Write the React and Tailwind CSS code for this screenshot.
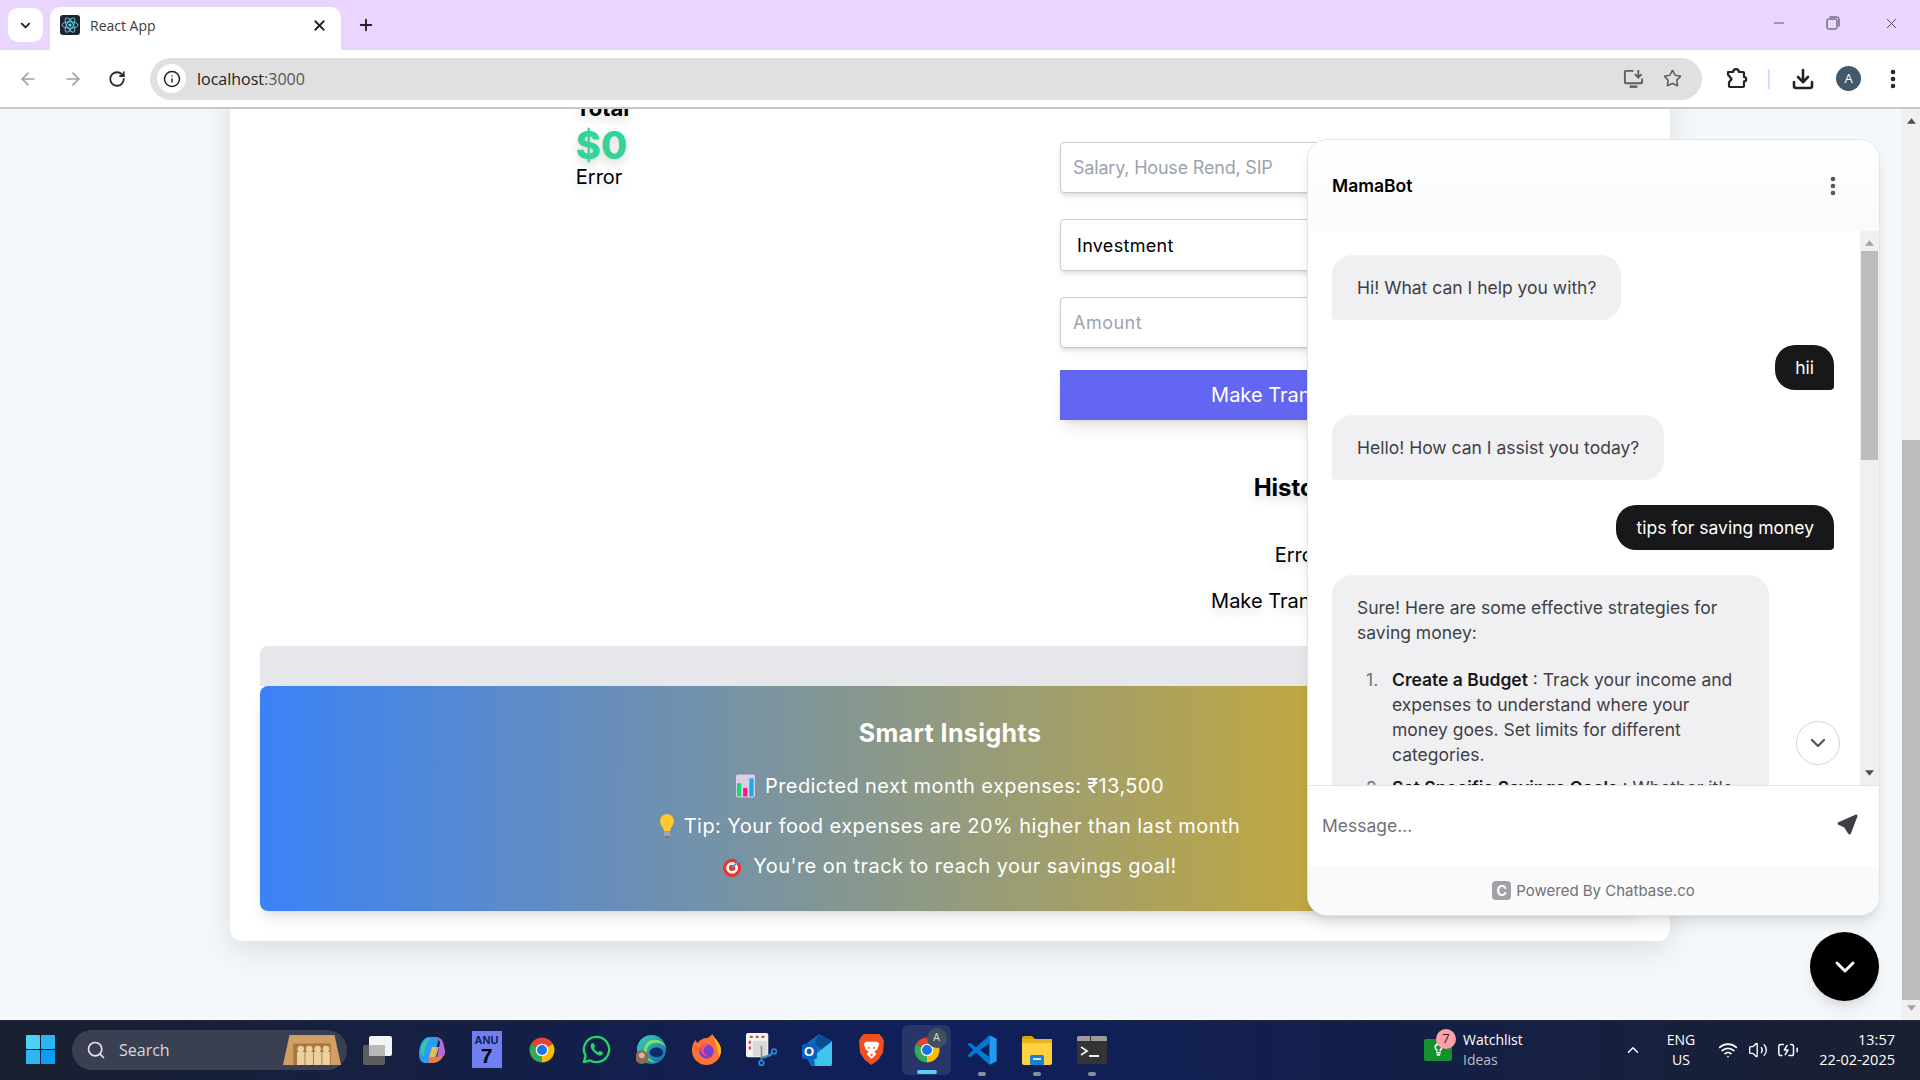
import React from "react";
import {
  ChevronDown,
  ChevronUp,
  X,
  Plus,
  ArrowLeft,
  ArrowRight,
  RotateCw,
  Info,
  Star,
  Download,
  EllipsisVertical,
  Minus,
  Search,
  Wifi,
  Volume2,
  BatteryCharging,
  Lightbulb,
} from "lucide-react";

function ReactFavicon() {
  return (
    <svg viewBox="0 0 20 20" className="w-5 h-5 rounded-[3px] bg-[#20232a]">
      <g fill="none" stroke="#61dafb" strokeWidth="0.9">
        <ellipse cx="10" cy="10" rx="8" ry="3.2" />
        <ellipse cx="10" cy="10" rx="8" ry="3.2" transform="rotate(60 10 10)" />
        <ellipse cx="10" cy="10" rx="8" ry="3.2" transform="rotate(120 10 10)" />
      </g>
      <circle cx="10" cy="10" r="1.6" fill="#61dafb" />
    </svg>
  );
}

function RestoreIcon() {
  return (
    <svg viewBox="0 0 14 14" className="w-[14px] h-[14px]" fill="none" stroke="#3b3640" strokeWidth="1">
      <rect x="1" y="3" width="10" height="10" rx="1.5" />
      <path d="M3.5 1h7.5a2 2 0 0 1 2 2v7.5" />
    </svg>
  );
}

function InstallIcon() {
  return (
    <svg viewBox="0 0 24 24" className="w-[23px] h-[23px]" fill="none" stroke="#5f5f5f" strokeWidth="2">
      <path d="M12 4H4a1 1 0 0 0-1 1v11a1 1 0 0 0 1 1h16a1 1 0 0 0 1-1v-4" />
      <path d="M8 20.5h8" strokeWidth="2.6" />
      <path d="M17 3v8M13.5 7.5 17 11l3.5-3.5" />
    </svg>
  );
}

function ExtensionsIcon() {
  return (
    <svg viewBox="0 0 24 24" className="w-[24px] h-[24px]" fill="none" stroke="#222" strokeWidth="2.2" strokeLinejoin="round">
      <path d="M4 5h5.2a2.8 2.8 0 0 1 5.6 0H19a1 1 0 0 1 1 1v4a2.2 2.2 0 0 1 0 4.4V19a1 1 0 0 1-1 1H6a1 1 0 0 1-1-1v-3.500l2.500-3.500L4 7.500Z" />
    </svg>
  );
}

function Triangle({ down, className }) {
  return (
    <svg viewBox="0 0 10 6" className={className}>
      <path d={down ? "M0 0h10L5 6z" : "M0 6h10L5 0z"} fill="currentColor" />
    </svg>
  );
}

function ChromeLogo() {
  return (
    <svg viewBox="0 0 48 48" className="w-[30px] h-[30px]">
      <path d="M24 24 6.68 14A20 20 0 0 1 41.32 14Z" fill="#ea4335" />
      <path d="M24 24 41.32 14A20 20 0 0 1 24 44Z" fill="#fbbc04" />
      <path d="M24 24V44A20 20 0 0 1 6.68 14Z" fill="#34a853" />
      <circle cx="24" cy="24" r="10" fill="#fff" />
      <circle cx="24" cy="24" r="8" fill="#1a73e8" />
    </svg>
  );
}

function WindowsLogo() {
  return (
    <svg viewBox="0 0 29 29" className="w-[29px] h-[29px]">
      <rect x="0" y="0" width="14" height="14" rx="1" fill="#4fd0f7" />
      <rect x="15" y="0" width="14" height="14" rx="1" fill="#2cb7f3" />
      <rect x="0" y="15" width="14" height="14" rx="1" fill="#2cb7f3" />
      <rect x="15" y="15" width="14" height="14" rx="1" fill="#0f9cee" />
    </svg>
  );
}

function TaskView() {
  return (
    <svg viewBox="0 0 30 30" className="w-[30px] h-[30px]">
      <rect x="1" y="10" width="22" height="20" rx="2" fill="#5c5c5c" />
      <rect x="7" y="1" width="23" height="20" rx="2" fill="#f4f4f4" />
      <rect x="7" y="10" width="16" height="11" fill="#b9b9b9" />
    </svg>
  );
}

function Copilot() {
  return (
    <svg viewBox="0 0 30 30" className="w-[30px] h-[30px]">
      <path d="M12 2h6c2 0 3 1 3.5 3L16 25c-.6 2-2 3-4 3H8C4 28 2 24 2 19 2 9 7 2 12 2Z" fill="#2c9cf0" />
      <path d="M7 21c-3-1-4-5-3-9s5-9 9-9c-3 3-6 12-6 18Z" fill="#35c9a0" />
      <path d="M18 2c4 0 7 2 8 5l2 9c.5 4-2 6-5 6h-3L23 8c-.5-3-2-5-5-6Z" fill="#b56ae0" />
      <path d="M11 22h9c4 0 7-2 8-6-1 7-6 12-12 12h-6c2 0 3-2 1-6Z" fill="#f0784e" />
      <path d="M15 12h7l-3 10h-7Z" fill="#f7c948" opacity="0.85" />
    </svg>
  );
}

function AnuCalendar() {
  return (
    <div className="w-[30px] h-[37px] bg-[#6f7ff0] flex flex-col items-center font-['Liberation_Sans',sans-serif] text-[#10204f] font-bold">
      <span className="text-[11px] leading-[12px] mt-[3px]">ANU</span>
      <span className="text-[21px] leading-[20px] text-black">7</span>
    </div>
  );
}

function WhatsApp() {
  return (
    <svg viewBox="0 0 32 32" className="w-[31px] h-[31px]">
      <path d="M16 3a13 13 0 0 0-11.2 19.6L3 29l6.6-1.7A13 13 0 1 0 16 3Z" fill="none" stroke="#25d366" strokeWidth="2.4" strokeLinejoin="round" />
      <path d="M11.5 9.5c-1 .6-1.8 2-1.5 3.7.5 3 4.6 8 9 9 1.7.3 3-.6 3.5-1.8l.2-1.4-3.2-1.700-1.500 1.600c-2-.7-3.800-2.500-4.600-4.500l1.300-1.500-1.500-3.400Z" fill="#25d366" />
    </svg>
  );
}

function Edge() {
  return (
    <svg viewBox="0 0 32 32" className="w-[31px] h-[31px]">
      <defs>
        <linearGradient id="edgeFill" x1="0" y1="0" x2="1" y2="1">
          <stop offset="0" stopColor="#3bd0b0" />
          <stop offset="1" stopColor="#1167b1" />
        </linearGradient>
      </defs>
      <circle cx="16" cy="16" r="15" fill="url(#edgeFill)" />
      <path d="M31 17c0-5-5-8-10-8-6 0-10 4-10 9 0 6 5 11 11 11-5 1-14-2-14-11C8 10 14 5 20 6c6 .5 11 5 11 11Z" fill="#7fe06a" />
      <ellipse cx="21" cy="19" rx="7" ry="5" fill="#0c2a66" />
      <circle cx="6" cy="24" r="7" fill="#8a6a55" />
      <circle cx="6" cy="22" r="3" fill="#d8b79c" />
    </svg>
  );
}

function Firefox() {
  return (
    <svg viewBox="0 0 30 32" className="w-[29px] h-[31px]">
      <path d="M16 4c2-1 4-3 5-4 1 3 3 4 5 7 3 4 4 7 4 10a15 15 0 0 1-30 0c0-4 1-8 4-11 0 2 1 3 2 3 2-3 6-5 10-5Z" fill="#ff7139" />
      <path d="M21 0c1 3 3 4 5 7 3 4 4 7 4 10 0 3-1 5-2 7-1-8-4-15-7-24Z" fill="#ffb61e" />
      <circle cx="15" cy="18" r="7.5" fill="#7a3fc4" />
      <path d="M9 13c2-2 6-3 8-1-3 0-5 2-5 5 0 4 3 6 7 6-5 2-12-4-10-10Z" fill="#ff4f5e" />
    </svg>
  );
}

function SnippingTool() {
  return (
    <svg viewBox="0 0 32 34" className="w-[31px] h-[33px]">
      <rect x="0" y="0" width="23" height="25" rx="2" fill="#f4f4f4" />
      <path d="M4 4h3M10 4h3M16 4h3M4 8v3M4 14v3" stroke="#e0483e" strokeWidth="2.4" />
      <rect x="7" y="8" width="15" height="16" fill="#d9d9d9" />
      <path d="M16 13v14M16 25l10-2" stroke="#8d8d8d" strokeWidth="1.6" fill="none" />
      <circle cx="29" cy="19" r="2.4" fill="none" stroke="#1f8fe0" strokeWidth="1.8" />
      <circle cx="16" cy="31" r="2.4" fill="none" stroke="#1f8fe0" strokeWidth="1.8" />
      <path d="M18 26l9-5M16 28v-3" stroke="#1f8fe0" strokeWidth="1.8" />
    </svg>
  );
}

function Outlook() {
  return (
    <div className="relative w-[30px] h-[33px]">
      <svg viewBox="0 0 30 33" className="w-[30px] h-[33px]">
        <path d="M5 10 17 1l13 7v23a2 2 0 0 1-2 2H9l-4-8Z" fill="#0f6cbd" />
        <path d="M30 8v23a2 2 0 0 1-2 2H13l-1-10 8-7Z" fill="#3fc4ee" />
        <path d="M17 1l13 7-10 8-8-5Z" fill="#0a4c95" />
      </svg>
      <div className="absolute left-0 top-[11px] w-[15px] h-[15px] rounded-[2px] bg-[#0a5fc0] text-white text-[13px] leading-[15px] text-center font-bold font-['Liberation_Sans',sans-serif]">
        O
      </div>
    </div>
  );
}

function Brave() {
  return (
    <svg viewBox="0 0 26 32" className="w-[25px] h-[31px]">
      <path d="M5 0h16l3 3 2 4-1 12-5 8-7 5-7-5-5-8L0 7l2-4Z" fill="#f0501e" />
      <path d="M7 8h12l2 2-2 6-3 2 2 3-5 5-5-5 2-3-3-2-2-6Z" fill="#fff" />
      <path d="M10 13l2 2h-3ZM16 13l1 2h-3ZM11 21h4l-2 2Z" fill="#f0501e" />
    </svg>
  );
}

function VsCode() {
  return (
    <svg viewBox="0 0 24 24" className="w-[32px] h-[32px]">
      <path d="M17.5 1 23 3.6V20.400L17.5 23Z" fill="#1f9cf0" />
      <path d="M17.5 1 7.5 10 3 6.5 1 7.6 5.5 12 1 16.400 3 17.500 7.500 14 17.500 23V17L10.500 12 17.500 7Z" fill="#0078d4" />
    </svg>
  );
}

function Folder() {
  return (
    <svg viewBox="0 0 30 30" className="w-[30px] h-[30px]">
      <path d="M0 3a2 2 0 0 1 2-2h8l3 3h-13Z" fill="#d9a106" />
      <rect x="0" y="4" width="30" height="26" rx="2" fill="#fdd13f" />
      <rect x="0" y="4" width="30" height="4" fill="#e8b21a" />
      <rect x="8" y="20" width="14" height="10" rx="1.5" fill="#1e7fd0" />
      <rect x="11" y="23" width="8" height="2" fill="#c9e6ff" />
    </svg>
  );
}

function Terminal() {
  return (
    <svg viewBox="0 0 30 28" className="w-[30px] h-[28px]">
      <rect x="0" y="0" width="30" height="28" rx="2" fill="#333" />
      <path d="M2 0h26a2 2 0 0 1 2 2v3H0V2a2 2 0 0 1 2-2Z" fill="#9c9c9c" />
      <rect x="13" y="0" width="1" height="5" fill="#333" />
      <path d="M4 11l6 4-6 4" fill="none" stroke="#eee" strokeWidth="1.8" />
      <rect x="12" y="19" width="10" height="2" fill="#eee" />
    </svg>
  );
}

function ChartEmoji() {
  return (
    <svg viewBox="0 0 20 24" className="w-[19px] h-[24px]">
      <rect x="0" y="0" width="20" height="24" rx="2" fill="#d9d0e6" />
      <rect x="1" y="9" width="4.5" height="14" fill="#1ed66f" />
      <rect x="7.5" y="14" width="4.5" height="9" fill="#f01a8c" />
      <rect x="14" y="4" width="4.5" height="19" fill="#1aa8ee" />
    </svg>
  );
}

function BulbEmoji() {
  return (
    <svg viewBox="0 0 14 24" className="w-[14px] h-[24px]">
      <path d="M7 0a7 7 0 0 0-7 7c0 3 2 5 3.5 8l.5 2h6l.5-2C12 12 14 10 14 7a7 7 0 0 0-7-7Z" fill="#fdc92f" />
      <rect x="4" y="17" width="6" height="5" rx="1" fill="#a3a3a3" />
      <rect x="5" y="22" width="4" height="2" rx="1" fill="#777" />
    </svg>
  );
}

function TargetEmoji() {
  return (
    <svg viewBox="0 0 22 24" className="w-[20px] h-[22px]">
      <circle cx="10" cy="14" r="10" fill="#e8342b" />
      <circle cx="10" cy="14" r="6.5" fill="#fff" />
      <circle cx="10" cy="14" r="3.5" fill="#e8342b" />
      <path d="M10 14 20 3" stroke="#3ba5e8" strokeWidth="2" />
      <path d="M18 0v4h4z" fill="#3ba5e8" />
    </svg>
  );
}

function TabStrip() {
  return (
    <div className="h-[50px] bg-[#e9d5ff] flex items-start shrink-0">
      <div className="w-[35px] h-[34px] mt-2 ml-2 bg-white rounded-[10px] flex items-center justify-center">
        <ChevronDown className="w-[15px] h-[15px] text-[#222]" strokeWidth={3} />
      </div>
      <div className="w-[291px] h-[43px] mt-[7px] ml-[7px] bg-white rounded-t-[10px] flex items-center pl-[10px] pr-[13px] pb-[7px]">
        <ReactFavicon />
        <span className="ml-[10px] text-[14px] text-[#3c3c3c] font-['Open_Sans',sans-serif]">React App</span>
        <X className="ml-auto w-[17px] h-[17px] text-[#222]" strokeWidth={2.5} />
      </div>
      <Plus className="ml-[16px] mt-[16px] w-[18px] h-[18px] text-[#222]" strokeWidth={2.5} />
      <div className="ml-auto h-[46px] flex items-center text-[#3b3640]">
        <Minus className="w-[16px] h-[16px]" strokeWidth={1.2} />
        <div className="ml-[39px]">
          <RestoreIcon />
        </div>
        <X className="ml-[43px] mr-[20px] w-[17px] h-[17px]" strokeWidth={1.2} />
      </div>
    </div>
  );
}

function Toolbar() {
  return (
    <div className="h-[59px] bg-white border-b-2 border-[#c8c8c8] flex items-center shrink-0 rounded-t-[10px]">
      <ArrowLeft className="ml-[18px] w-[20px] h-[20px] text-[#a0a0a0]" strokeWidth={2} />
      <ArrowRight className="ml-[25px] w-[20px] h-[20px] text-[#a0a0a0]" strokeWidth={2} />
      <RotateCw className="ml-[25px] w-[18px] h-[18px] text-[#2a2a2a]" strokeWidth={2.4} />
      <div className="ml-[24px] w-[1552px] h-[42px] bg-[#e0e0e0] rounded-full flex items-center pl-[7px] pr-[20px]">
        <div className="w-[29px] h-[29px] bg-white rounded-full flex items-center justify-center">
          <Info className="w-[18px] h-[18px] text-[#222]" strokeWidth={2} />
        </div>
        <span className="ml-[11px] text-[16px] text-[#202020] font-['Open_Sans',sans-serif]">
          localhost<span className="text-[#555]">:3000</span>
        </span>
        <div className="ml-auto">
          <InstallIcon />
        </div>
        <Star className="ml-[18px] w-[19px] h-[19px] text-[#5f5f5f]" strokeWidth={2} />
      </div>
      <div className="ml-[22px]">
        <ExtensionsIcon />
      </div>
      <div className="ml-[20px] w-[2px] h-[20px] bg-[#e9d5ff]" />
      <Download className="ml-[21px] w-[24px] h-[24px] text-[#222]" strokeWidth={2.6} />
      <div className="ml-[21px] w-[25px] h-[25px] rounded-full bg-[#41596b] text-white text-[13px] flex items-center justify-center font-['Open_Sans',sans-serif]">
        A
      </div>
      <EllipsisVertical className="ml-[20px] w-[24px] h-[24px] text-[#222]" strokeWidth={2.6} />
    </div>
  );
}

const textShadow = "[text-shadow:0_5px_10px_rgba(0,0,0,0.14)]";

function TransactionForm() {
  return (
    <div className="w-[470px] flex flex-col items-stretch mt-[48px] text-[18px] text-black">
      <input
        placeholder="Salary, House Rend, SIP"
        className="h-[51px] px-3 bg-white border border-[#ccc] rounded-[4px] shadow-md tracking-[-0.2px] placeholder:text-[#9ca3af] outline-none"
      />
      <select className="mt-[26px] h-[52px] px-3 bg-white border border-[#ccc] rounded-[4px] shadow-md tracking-[0.3px] outline-none">
        <option>Investment</option>
      </select>
      <input
        placeholder="Amount"
        className="mt-[26px] h-[51px] px-3 bg-white border border-[#ccc] rounded-[4px] shadow-md tracking-[0.5px] placeholder:text-[#9ca3af] outline-none"
      />
      <button className="mt-[22px] h-[50px] bg-[#6366f1] text-white text-[20px] shadow-lg">Make Transaction</button>
    </div>
  );
}

function Dashboard() {
  return (
    <div className="ml-[230px] -mt-[45px] w-[1440px] h-[877px] shrink-0 bg-white rounded-xl shadow-[0_10px_30px_rgba(0,0,0,0.1)] p-[30px] font-['Inter',sans-serif]">
      <div className="grid grid-cols-2 h-[522px]">
        <div className="flex justify-center">
          <div className={`mr-[5px] text-black ${textShadow}`}>
            <div className="text-[22px] leading-[28px] font-bold">Total</div>
            <div className="text-[38px] leading-[40px] font-extrabold text-[#34d399] mt-[3px]">$0</div>
            <div className="text-[20px] leading-[28px] -mt-[2px]">Error</div>
          </div>
        </div>
        <div className="flex flex-col items-center">
          <TransactionForm />
          <div className={`mt-[52px] pl-[3px] text-[24px] leading-[32px] font-bold text-black ${textShadow}`}>History</div>
          <div className={`mt-[37px] pl-[6px] text-[20px] leading-[28px] text-black ${textShadow}`}>Error</div>
          <div className={`mt-[18px] text-[20px] leading-[28px] text-black ${textShadow}`}>Make Transaction</div>
        </div>
      </div>
      <div className="mt-[30px] h-[40px] bg-[#e5e7eb] rounded-t-lg" />
      <div className="h-[225px] rounded-lg bg-linear-to-r/srgb from-[#3b82f6] to-[#eab308] shadow-lg text-white flex flex-col items-center pt-[31px]">
        <div className="text-[25px] leading-[32px] font-bold tracking-[0.4px]">Smart Insights</div>
        <div className="mt-[23px] h-[28px] flex items-center gap-[10px] text-[20px] tracking-[0.4px]">
          <ChartEmoji />
          Predicted next month expenses: ₹13,500
        </div>
        <div className="mt-[12px] h-[28px] flex items-center gap-[10px] text-[20px] tracking-[0.45px]">
          <BulbEmoji />
          Tip: Your food expenses are 20% higher than last month
        </div>
        <div className="mt-[12px] h-[28px] flex items-center gap-[10px] text-[20px] tracking-[0.45px]">
          <TargetEmoji />
          You're on track to reach your savings goal!
        </div>
      </div>
    </div>
  );
}

function BotBubble({ children, className = "" }) {
  return (
    <div className={`self-start shrink-0 bg-[#f0f0f2] text-[#3f3f46] rounded-[20px] rounded-bl-[4px] px-[25px] ${className}`}>
      {children}
    </div>
  );
}

function UserBubble({ children }) {
  return (
    <div className="self-end shrink-0 h-[45px] mt-[25px] flex items-center bg-[#18181b] text-white rounded-[20px] rounded-br-[4px] px-[20px]">
      {children}
    </div>
  );
}

function ListItem({ number, title, children, className = "" }) {
  return (
    <li className={`flex ${className}`}>
      <span className="w-[26px] shrink-0 text-[#71717a]">{number}.</span>
      <span>
        <strong className="font-semibold text-[#18181b]">{title}</strong> : {children}
      </span>
    </li>
  );
}

function ChatWidget() {
  return (
    <div className="absolute left-[1307px] top-[139px] w-[573px] h-[777px] bg-white border border-[#e4e4e7] rounded-[20px] shadow-lg overflow-hidden flex flex-col font-['Inter',sans-serif] text-[17.5px] leading-[25px]">
      <div className="h-[91px] shrink-0 bg-linear-to-b from-white to-[#fafafa] flex items-center pl-[24px] pr-[34px]">
        <span className="font-semibold text-black">MamaBot</span>
        <EllipsisVertical className="ml-auto w-[24px] h-[24px] text-[#52525b]" strokeWidth={2.6} />
      </div>
      <div className="relative h-[555px] shrink-0 flex border-b border-[#e4e4e7]">
        <div className="flex-1 min-w-0 overflow-hidden flex flex-col pl-[24px] pr-[26px] pt-[24px]">
          <BotBubble className="h-[65px] flex items-center">Hi! What can I help you with?</BotBubble>
          <UserBubble>hii</UserBubble>
          <BotBubble className="h-[65px] flex items-center mt-[25px]">Hello! How can I assist you today?</BotBubble>
          <UserBubble>tips for saving money</UserBubble>
          <BotBubble className="w-[437px] mt-[25px] pt-[20px] pb-[25px] rounded-bl-[20px]">
            <p>Sure! Here are some effective strategies for saving money:</p>
            <ol className="mt-[22px] pl-[9px]">
              <ListItem number={1} title="Create a Budget">
                Track your income and expenses to understand where your money goes. Set limits for different categories.
              </ListItem>
              <ListItem number={2} title="Set Specific Savings Goals" className="mt-[8px]">
                Whether it's a vacation or an emergency fund.
              </ListItem>
            </ol>
          </BotBubble>
        </div>
        <div className="w-[19px] shrink-0 bg-[#f0f0f0] flex flex-col items-center relative">
          <Triangle className="w-[9px] h-[6px] mt-[9px] text-[#a3a3a3]" />
          <div className="w-[17px] h-[209px] mt-[5px] bg-[#bcbcbc]" />
          <Triangle down className="w-[9px] h-[6px] mt-auto mb-[9px] text-[#505050]" />
        </div>
        <div className="absolute left-[488px] top-[490px] w-[44px] h-[44px] rounded-full bg-white border border-[#d4d4d8] flex items-center justify-center">
          <ChevronDown className="w-[24px] h-[24px] text-[#52525b]" strokeWidth={2.2} />
        </div>
      </div>
      <div className="h-[80px] shrink-0 flex items-center pl-[14px] pr-[20px] pb-[2px]">
        <input placeholder="Message..." className="flex-1 outline-none placeholder:text-[#71717a]" />
        <svg viewBox="0 0 24 24" className="w-[24px] h-[24px]">
          <path d="M21 3 4 10.5 9.5 13l2.5-1-1 2.5 3.5 5.5Z" fill="#3f3f46" stroke="#3f3f46" strokeWidth="3" strokeLinejoin="round" />
        </svg>
      </div>
      <div className="flex-1 bg-[#fafafa] flex items-center justify-center pb-[1px] text-[15px] text-[#71717a]">
        <span className="w-[19px] h-[19px] rounded-[4px] bg-[#a1a1aa] text-white text-[14px] font-bold flex items-center justify-center mr-[5px]">C</span>
        Powered By Chatbase.co
      </div>
    </div>
  );
}

function PageScrollbar() {
  return (
    <div className="w-[18px] shrink-0 bg-[#f0f0f0] flex flex-col items-center">
      <Triangle className="w-[9px] h-[6px] mt-[9px] text-[#505050]" />
      <div className="w-[18px] h-[560px] mt-[316px] bg-[#bcbcbc]" />
      <Triangle down className="w-[9px] h-[6px] mt-auto mb-[9px] text-[#a3a3a3]" />
    </div>
  );
}

function TaskbarIcon({ children, dot, active }) {
  return (
    <div className="relative shrink-0 w-[55px] h-[50px] flex items-center justify-center">
      {active && <div className="absolute left-[3px] top-0 w-[49px] h-[50px] rounded-[6px] bg-[#ffffff1a]" />}
      <div className="relative">{children}</div>
      {dot && <div className="absolute left-[24px] bottom-[-1px] w-[8px] h-[4px] rounded-full bg-[#8a8f99]" />}
      {active && <div className="absolute left-[18px] bottom-[1px] w-[20px] h-[4px] rounded-full bg-[#5cc8ff]" />}
    </div>
  );
}

function Taskbar() {
  return (
    <div className="h-[60px] shrink-0 flex items-center pb-[2px] text-white whitespace-nowrap font-['Open_Sans',sans-serif] bg-linear-to-r/srgb from-[#1a2030] via-[#0f1f5c] to-[#1a2030] border-t border-[#20273a]">
      <div className="ml-[26px] shrink-0">
        <WindowsLogo />
      </div>
      <div className="ml-[17px] w-[275px] h-[40px] shrink-0 rounded-full bg-[#3a4052] flex items-center pl-[14px] relative">
        <Search className="w-[20px] h-[20px] text-[#e4e4e4]" strokeWidth={2} />
        <span className="ml-[13px] text-[16px] text-[#d8d8d8]">Search</span>
        <svg viewBox="0 0 64 36" className="absolute right-[5px] top-[2px] w-[60px] h-[36px]">
          <path d="M8 2h48l7 32H1Z" fill="#d09f66" />
          <path d="M12 11h40v23H12Z" fill="#a8773f" />
          <circle cx="20" cy="17" r="3.5" fill="#edd0a0" />
          <circle cx="29" cy="17" r="3.5" fill="#edd0a0" />
          <circle cx="38" cy="17" r="3.5" fill="#edd0a0" />
          <circle cx="47" cy="17" r="3.5" fill="#edd0a0" />
          <path d="M16 20h8v14h-8ZM25 20h8v14h-8ZM34 20h8v14h-8ZM43 20h8v14h-8Z" fill="#edd0a0" />
        </svg>
      </div>
      <div className="ml-[2px] flex items-center shrink-0">
        <TaskbarIcon><TaskView /></TaskbarIcon>
        <TaskbarIcon><Copilot /></TaskbarIcon>
        <TaskbarIcon><AnuCalendar /></TaskbarIcon>
        <TaskbarIcon><ChromeLogo /></TaskbarIcon>
        <TaskbarIcon><WhatsApp /></TaskbarIcon>
        <TaskbarIcon><Edge /></TaskbarIcon>
        <TaskbarIcon><Firefox /></TaskbarIcon>
        <TaskbarIcon><SnippingTool /></TaskbarIcon>
        <TaskbarIcon><Outlook /></TaskbarIcon>
        <TaskbarIcon><Brave /></TaskbarIcon>
        <TaskbarIcon active>
          <ChromeLogo />
          <div className="absolute -right-[5px] -top-[7px] w-[20px] h-[20px] rounded-full bg-[#41505c] text-[11px] text-[#ddd] flex items-center justify-center">A</div>
        </TaskbarIcon>
        <TaskbarIcon dot><VsCode /></TaskbarIcon>
        <TaskbarIcon dot><Folder /></TaskbarIcon>
        <TaskbarIcon dot><Terminal /></TaskbarIcon>
      </div>
      <div className="ml-[305px] relative shrink-0 w-[28px] h-[22px] bg-[#15922f] rounded-[2px] flex items-center justify-center">
        <Lightbulb className="w-[13px] h-[13px] text-white" strokeWidth={3} />
        <div className="absolute -right-[4px] -top-[10px] w-[20px] h-[20px] rounded-full bg-[#ffa0a8] text-[#222] text-[13px] flex items-center justify-center">7</div>
      </div>
      <div className="ml-[11px] w-[63px] shrink-0 flex flex-col text-[14px] leading-[20px]">
        <span>Watchlist</span>
        <span className="text-[#b8bcc4]">Ideas</span>
      </div>
      <ChevronUp className="ml-[98px] shrink-0 w-[18px] h-[18px]" strokeWidth={2} />
      <div className="ml-[24px] w-[30px] shrink-0 flex flex-col items-center text-[14px] leading-[20px]">
        <span>ENG</span>
        <span>US</span>
      </div>
      <Wifi className="ml-[22px] shrink-0 w-[20px] h-[20px]" strokeWidth={2} />
      <Volume2 className="ml-[10px] shrink-0 w-[20px] h-[20px]" strokeWidth={1.6} />
      <BatteryCharging className="ml-[9px] shrink-0 w-[22px] h-[22px]" strokeWidth={1.6} />
      <div className="ml-auto mr-[25px] shrink-0 flex flex-col items-end text-[14.5px] leading-[20px]">
        <span>13:57</span>
        <span>22-02-2025</span>
      </div>
    </div>
  );
}

export default function App() {
  return (
    <div className="relative w-[1920px] h-[1080px] overflow-hidden flex flex-col">
      <TabStrip />
      <Toolbar />
      <div className="flex-1 min-h-0 flex overflow-hidden">
        <div className="flex-1 min-w-0 bg-[#f5f8fb] flex flex-col overflow-hidden">
          <Dashboard />
        </div>
        <PageScrollbar />
      </div>
      <Taskbar />
      <ChatWidget />
      <div className="absolute left-[1810px] top-[932px] w-[69px] h-[69px] rounded-full bg-black shadow-lg flex items-center justify-center">
        <ChevronDown className="w-[32px] h-[32px] text-white" strokeWidth={2.2} />
      </div>
    </div>
  );
}
